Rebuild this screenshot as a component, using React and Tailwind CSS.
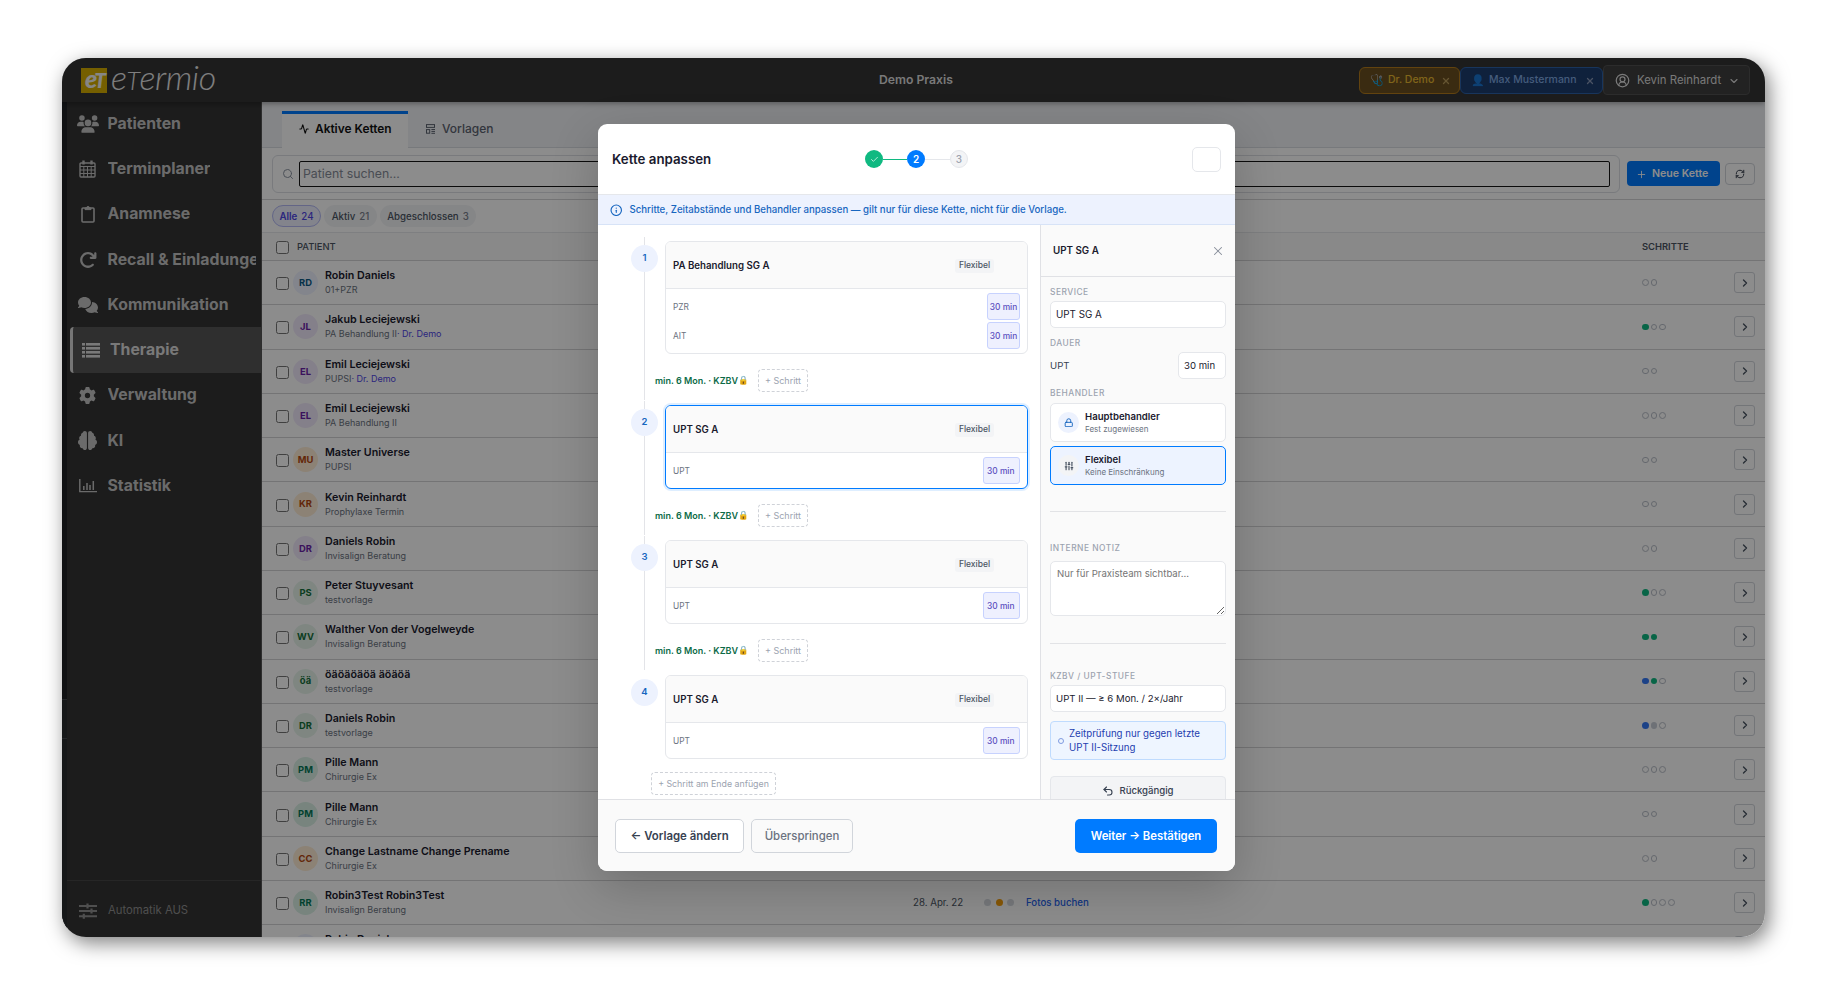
import { FaUsers, FaComments, FaGear, FaBrain, FaArrowRotateRight } from 'react-icons/fa6';
import {
  Activity, Check, ChevronDown, ChevronRight, CircleUserRound, Info,
  Lock, Plus, RefreshCw, Search, SlidersVertical, Undo2, X,
} from 'lucide-react';

const CalendarIcon = () => (
  <svg width="17" height="18" viewBox="0 0 17 18" fill="none" stroke="currentColor">
    <rect x="1" y="3" width="15" height="14" rx="1" strokeWidth="1.4" />
    <path d="M1 6.5h15M1 10h15M1 13.5h15M4.8 6v11M8.5 6v11M12.2 6v11" strokeWidth="1" />
    <path d="M4.5 0.5v4M12.5 0.5v4" strokeWidth="2.4" />
  </svg>
);

const ClipboardIcon = () => (
  <svg width="14" height="18" viewBox="0 0 14 18" fill="none" stroke="currentColor">
    <rect x="1" y="3" width="12" height="14" rx="1" strokeWidth="1.6" />
    <path d="M4 4.6V3h1.5a1.5 1.5 0 0 1 3 0H10v1.6z" fill="currentColor" strokeWidth="1" />
  </svg>
);

const ListIcon = () => (
  <svg width="18" height="15" viewBox="0 0 18 15" fill="currentColor">
    {[0, 4, 8, 12].map((y) => (
      <g key={y}>
        <rect x="0" y={y} width="3" height="2.6" />
        <rect x="4" y={y} width="14" height="2.6" />
      </g>
    ))}
  </svg>
);

const ChartIcon = () => (
  <svg width="18" height="14" viewBox="0 0 18 14" fill="none" stroke="currentColor">
    <path d="M.8 0v12.6H18" strokeWidth="1.4" />
    <path d="M4.8 7v4M8 4v7M11 6v5M14.3 2v9" strokeWidth="1.5" />
  </svg>
);

const SlidersIcon = () => (
  <svg width="18" height="16" viewBox="0 0 18 16" fill="none" stroke="currentColor">
    <path d="M0 3h18M0 8h18M0 13.2h18" strokeWidth="1.9" />
    <path d="M8.5 0.5v5M12.5 5.5v5M4.8 10.7v5" strokeWidth="2.2" />
  </svg>
);

const TemplateIcon = () => (
  <svg width="9" height="10" viewBox="0 0 9 10" fill="none" stroke="currentColor">
    <rect x=".5" y=".6" width="8" height="2.8" />
    <rect x=".5" y="5.6" width="3.2" height="3.6" />
    <path d="M5.4 5.5H9M5.4 7.4H9M5.4 9.3H9" />
  </svg>
);

const nav = [
  { title: 'Patienten', icon: <FaUsers size={22} /> },
  { title: 'Terminplaner', icon: <CalendarIcon /> },
  { title: 'Anamnese', icon: <ClipboardIcon /> },
  { title: 'Recall & Einladungen', icon: <FaArrowRotateRight size={18} /> },
  { title: 'Kommunikation', icon: <FaComments size={20} /> },
  { title: 'Therapie', icon: <ListIcon />, active: true },
  { title: 'Verwaltung', icon: <FaGear size={17} /> },
  { title: 'KI', icon: <FaBrain size={19} /> },
  { title: 'Statistik', icon: <ChartIcon /> },
];

const tones = {
  blue: 'bg-[#eef2ff] text-[#0c5a86]',
  purple: 'bg-[#f1eafb] text-[#6b21a8]',
  orange: 'bg-[#ffedd5] text-[#b4470f]',
  green: 'bg-[#e8f5ec] text-[#15703a]',
  teal: 'bg-[#daf1e6] text-[#047857]',
};

const dots = {
  open: 'border border-[#b9bec8]',
  done: 'bg-[#10b981]',
  next: 'bg-[#3478f6]',
  gray: 'bg-[#c9ced8]',
};

const patients = [
  { name: 'Robin Daniels', sub: '01+PZR', short: 'RD', tone: 'blue', steps: ['open', 'open'] },
  { name: 'Jakub Leciejewski', sub: 'PA Behandlung II', doctor: 'Dr. Demo', short: 'JL', tone: 'purple', steps: ['done', 'open', 'open'] },
  { name: 'Emil Leciejewski', sub: 'PUPSI', doctor: 'Dr. Demo', short: 'EL', tone: 'purple', steps: ['open', 'open'] },
  { name: 'Emil Leciejewski', sub: 'PA Behandlung II', short: 'EL', tone: 'purple', steps: ['open', 'open', 'open'] },
  { name: 'Master Universe', sub: 'PUPSI', short: 'MU', tone: 'orange', steps: ['open', 'open'] },
  { name: 'Kevin Reinhardt', sub: 'Prophylaxe Termin', short: 'KR', tone: 'orange', steps: ['open', 'open'] },
  { name: 'Daniels Robin', sub: 'Invisalign Beratung', short: 'DR', tone: 'purple', steps: ['open', 'open'] },
  { name: 'Peter Stuyvesant', sub: 'testvorlage', short: 'PS', tone: 'green', steps: ['done', 'open', 'open'] },
  { name: 'Walther Von der Vogelweyde', sub: 'Invisalign Beratung', short: 'WV', tone: 'green', steps: ['done', 'done'] },
  { name: 'öäöäöäöä äöäöä', sub: 'testvorlage', short: 'öä', tone: 'green', steps: ['next', 'done', 'open'] },
  { name: 'Daniels Robin', sub: 'testvorlage', short: 'DR', tone: 'green', steps: ['next', 'gray', 'open'] },
  { name: 'Pille Mann', sub: 'Chirurgie Ex', short: 'PM', tone: 'teal', steps: ['open', 'open', 'open'] },
  { name: 'Pille Mann', sub: 'Chirurgie Ex', short: 'PM', tone: 'teal', steps: ['open', 'open'] },
  { name: 'Change Lastname Change Prename', sub: 'Chirurgie Ex', short: 'CC', tone: 'orange', steps: ['open', 'open'] },
  { name: 'Robin3Test Robin3Test', sub: 'Invisalign Beratung', short: 'RR', tone: 'teal', steps: ['done', 'open', 'open', 'open'], date: '28. Apr. 22', action: 'Fotos buchen' },
  { name: 'Robin Daniels', sub: '', short: '', tone: 'blue', steps: [] },
];

const Checkbox = () => <span className="mt-[2px] size-[13px] shrink-0 rounded-[2.5px] border border-[#767676] bg-white" />;

const Header = () => (
  <header className="relative z-10 flex h-[44px] shrink-0 items-center bg-[#343434] shadow-[0_1px_6px_rgba(0,0,0,0.4)]">
    <div className="flex w-[600px] items-center pl-[19px]">
      <div className="flex h-[25px] w-[26px] items-center justify-center bg-[#d6ae00] pb-[3px] font-['Lato'] text-[25px] leading-none font-black tracking-[-3px] text-[#f4f4f4] italic">
        <span>e<span className="text-[21px]">T</span></span>
      </div>
      <div className="-mt-[4px] ml-[4px] font-['Lato'] text-[34px] leading-[34px] font-light tracking-[-0.4px] text-[#e8e8e8] italic">
        e<span className="text-[25px]">T</span>ermio
      </div>
    </div>
    <div className="w-[509px] pl-[217px] text-[12.2px] font-semibold text-[#dddddd]">Demo Praxis</div>
    <div className="ml-[188px] flex items-center text-[10.5px] font-medium">
      <div className="flex h-[27px] w-[101px] items-center rounded-[6px] border border-[#b27b1c] bg-[#6b4f20] pt-px pl-[10px] text-[#e8b931]">
        <span className="w-[18px] text-[11px]">🩺</span>
        <span className="w-[53px] whitespace-nowrap">Dr. Demo</span>
        <X size={10} strokeWidth={3} className="shrink-0 text-[#b99b5a]" />
      </div>
      <div className="flex h-[27px] w-[143px] items-center rounded-[6px] border border-[#2c62a8] bg-[#1c3c6e] pt-px pl-[10px] text-[#7fa8e0]">
        <span className="w-[18px] text-[11px]">👤</span>
        <span className="w-[96px] whitespace-nowrap">Max Mustermann</span>
        <X size={10} strokeWidth={3} className="shrink-0 text-[#8798b5]" />
      </div>
      <div className="flex h-[30px] w-[147px] items-center rounded-[4px] border border-[#505050] bg-[#3f3f3f] pt-px pl-[11px] text-[11.4px] font-normal text-[#dcdcdc]">
        <CircleUserRound size={15} className="mr-[7px] shrink-0" />
        <span className="w-[91px] whitespace-nowrap">Kevin Reinhardt</span>
        <ChevronDown size={12} strokeWidth={2.2} className="shrink-0" />
      </div>
    </div>
  </header>
);

const Sidebar = () => (
  <aside className="flex w-[200px] shrink-0 border-r border-[#555] bg-[#343434]">
    <div className="w-[5px] shrink-0 bg-[#1f2226]">
      <div className="mt-[597px] h-[40px] border-y border-[#45494d] bg-[#292c2f]" />
      <div className="h-[240px] bg-[#292c2f]" />
    </div>
    <div className="-mt-px flex min-w-0 flex-1 flex-col overflow-hidden">
      {nav.map((el) => (
        <div key={el.title} className={el.active
          ? 'ml-[3px] flex h-[45.3px] shrink-0 items-center rounded-l-[4px] border-l-[3px] border-[#d8d8d8] bg-[#575757] text-[#dcdcdc]'
          : 'flex h-[45.3px] shrink-0 items-center text-[#c4c4c4]'}>
          <div className={el.active ? 'ml-[3px] flex w-[34px] shrink-0 justify-center pr-[4px]' : 'ml-[9px] flex w-[31.5px] shrink-0 justify-center pr-[8px]'}>{el.icon}</div>
          <div className="mr-[5px] overflow-hidden text-[15.8px] leading-[22px] font-bold whitespace-nowrap">{el.title}</div>
        </div>
      ))}
      <div className="mt-auto flex h-[57px] items-center border-t border-[#454545] pt-[3px] pl-[12px] text-[#909090]">
        <SlidersIcon />
        <span className="ml-[11px] text-[11.3px]">Automatik AUS</span>
      </div>
    </div>
  </aside>
);

const Row = ({ name, sub, doctor, short, tone, steps, date, action }) => (
  <div className="flex h-[44.29px] shrink-0 items-center border-b border-[#d3d3d6] pl-[14px]">
    <Checkbox />
    <div className={'ml-[4px] flex size-[25px] shrink-0 items-center justify-center rounded-full text-[9.4px] font-bold ' + tones[tone]}>{short}</div>
    <div className="ml-[7px] w-[588px] whitespace-nowrap">
      <div className="text-[10.7px] leading-[15px] font-semibold text-[#1a1a2e]">{name}</div>
      <div className="text-[9px] leading-[14px] text-[#6b7280]">
        {sub}{doctor && <span className="text-[#4f46e5]">· {doctor}</span>}&nbsp;
      </div>
    </div>
    <div className="flex w-[729px] items-center text-[9.7px] text-[#4b5563]">
      {date && <>
        <span className="w-[71px]">{date}</span>
        <span className="mr-[12px] flex gap-[4.5px]">
          <i className="size-[7px] rounded-full bg-[#d5d9df]" />
          <i className="size-[7px] rounded-full bg-[#f59e0b]" />
          <i className="size-[7px] rounded-full bg-[#d5d9df]" />
        </span>
        <span className="font-medium text-[#2563eb]">{action}</span>
      </>}
    </div>
    <div className="flex w-[92px] gap-[2.2px]">
      {steps.map((el, i) => <i key={i} className={'size-[6.5px] rounded-full ' + dots[el]} />)}
    </div>
    <div className="flex h-[21px] w-[21px] items-center justify-center rounded-[3px] border border-[#d1d5db] text-[#4b5563]">
      <ChevronRight size={12} strokeWidth={2.8} />
    </div>
  </div>
);

const Main = () => (
  <main className="flex min-w-0 flex-1 flex-col overflow-hidden bg-white">
    <div className="flex h-[46px] shrink-0 items-end border-b border-[#d9dce2] bg-[#f0f2f6] pl-[20px]">
      <div className="-mb-px flex h-[37px] w-[126px] items-center border-t-[3px] border-[#007bff] bg-white pb-[4px] pl-[17px] text-[11.9px] font-semibold text-[#111]">
        <Activity size={10} strokeWidth={2.6} className="mr-[6px]" />
        Aktive Ketten
      </div>
      <div className="flex h-[37px] items-center pl-[18px] text-[12px] font-medium text-[#5c6370]">
        <span className="mr-[7px]"><TemplateIcon /></span>
        Vorlagen
      </div>
    </div>
    <div className="flex h-[52px] shrink-0 items-center border-b border-[#d3d3d6] pl-[10px]">
      <div className="flex h-[38px] w-[1348px] items-center rounded-[6px] border border-[#dcdfe4] pl-[9px]">
        <Search size={12} strokeWidth={2} className="mr-[5px] text-[#8b93a0]" />
        <div className="flex h-[26px] w-[1311px] items-center rounded-[2px] border border-[#151515] pt-px pl-[3px] text-[12.3px] text-[#858b97]">
          Patient suchen...
        </div>
      </div>
      <div className="ml-[7px] flex h-[25px] w-[93px] items-center rounded-[4px] bg-[#007bff] pt-px pl-[9px] text-[10.6px] font-semibold text-white">
        <Plus size={11} strokeWidth={1.9} className="mr-[5px]" />
        Neue Kette
      </div>
      <div className="ml-[5px] flex h-[22px] w-[30px] items-center justify-center rounded-[4px] border border-[#d1d5db] text-[#3b4250]">
        <RefreshCw size={10} strokeWidth={2.4} />
      </div>
    </div>
    <div className="flex h-[33px] shrink-0 items-center gap-[3px] border-b border-[#e5e7eb] pl-[10px] text-[9.7px] font-medium text-[#4b5563]">
      <div className="flex h-[22px] w-[49px] items-center justify-center gap-[4px] rounded-full border border-[#b4b9f5] bg-[#eef0ff] pt-px font-semibold text-[#4f46e5]">Alle <span className="font-medium">24</span></div>
      <div className="flex h-[22px] w-[53px] items-center justify-center gap-[4px] rounded-full bg-[#f3f4f6] pt-px">Aktiv <span className="text-[#7b818d]">21</span></div>
      <div className="flex h-[22px] w-[96px] items-center justify-center gap-[4px] rounded-full bg-[#f3f4f6] pt-px">Abgeschlossen <span className="text-[#7b818d]">3</span></div>
    </div>
    <div className="flex h-[28px] shrink-0 items-center border-b border-[#d3d3d6] bg-[#fafafa] pl-[14px] text-[9.4px] font-medium text-[#4b5563]">
      <Checkbox />
      <span className="ml-[8px] w-[1345px]">PATIENT</span>
      <span className="font-semibold">SCHRITTE</span>
    </div>
    {patients.map((el, i) => <Row key={i} {...el} />)}
  </main>
);

const Step = ({ number, title, services, selected, last }) => (
  <div className="flex">
    <div className="relative flex w-[27px] flex-col items-center">
      {!last && <div className="absolute -top-1 bottom-[5px] w-px bg-[#e3e4e8]" />}
      <div className="relative mt-[3.5px] flex size-[27px] items-center justify-center rounded-full bg-[#edf2fe] text-[9.5px] font-semibold text-[#1766c0]">{number}</div>
    </div>
    <div className="ml-[7px]">
      <div className={selected
        ? 'w-[363px] overflow-hidden rounded-[6px] border border-[#007bff] bg-white shadow-[0_0_0_2px_rgba(0,123,255,0.13)]'
        : 'w-[363px] overflow-hidden rounded-[6px] border border-[#e5e7eb] bg-white'}>
        <div className="flex h-[47px] items-center border-b border-[#e5e7eb] bg-[#fafafa] pt-px pl-[7px] text-[9.7px] font-semibold text-[#1a1a2e]">
          <span className="w-[282px]">{title}</span>
          <span className="flex h-[14px] w-[39px] items-center justify-center rounded-[3px] bg-[#f3f4f6] text-[8.5px] font-medium text-[#4b5563]">Flexibel</span>
        </div>
        <div className={services.length > 1 ? 'flex flex-col gap-[2px] py-[4px]' : 'py-[4px]'}>
          {services.map((el) => (
            <div key={el} className="flex h-[27px] items-center justify-between pr-[7px] pl-[7px]">
              <span className="pt-[2px] text-[8.3px] text-[#6b7280]">{el}</span>
              <span className={services.length > 1
                ? 'flex h-full w-[33px] items-center justify-center rounded-[3px] border border-[#c7d2fe] bg-[#eef0fe] pt-[2px] text-[8.4px] font-medium text-[#5b4fc0]'
                : 'flex h-full w-[37px] items-center rounded-[3px] border border-[#c7d2fe] bg-[#eef0fe] pt-px pl-[3px] text-[8.4px] font-medium text-[#5b4fc0]'}>30 min</span>
            </div>
          ))}
        </div>
      </div>
      {!last && (
        <div className="-ml-[10px] flex h-[51px] items-center pt-px text-[9px] font-semibold text-[#0c6b47]">
          <span className="w-[83px] whitespace-nowrap">min. 6 Mon. · KZBV</span>
          <span className="w-[20px] text-[8.6px]">🔒</span>
          <span className="flex h-[23px] w-[50px] items-center justify-center rounded-[4px] border border-dashed border-[#cfd2d8] text-[9px] font-normal text-[#9ca3af]">+ Schritt</span>
        </div>
      )}
    </div>
  </div>
);

const Label = ({ children }) => <div className="text-[8.4px] leading-[12px] font-medium tracking-[0.5px] text-[#9ca3af]">{children}</div>;

const Option = ({ icon, title, text, active }) => (
  <div className={active
    ? 'flex h-[39px] items-center rounded-[5px] border border-[#007bff] bg-[#edf3ff] pl-[7px]'
    : 'flex h-[39px] items-center rounded-[5px] border border-[#e5e7eb] bg-white pl-[7px]'}>
    <div className={active
      ? 'flex size-[21px] items-center justify-center rounded-full bg-[#f3f4f6] text-[#4b5563]'
      : 'flex size-[21px] items-center justify-center rounded-full bg-[#edf2fe] text-[#1766c0]'}>{icon}</div>
    <div className="ml-[6px] pt-px">
      <div className="text-[9.6px] leading-[13px] font-semibold text-[#1a1a2e]">{title}</div>
      <div className="text-[8px] leading-[13px] text-[#6b7280]">{text}</div>
    </div>
  </div>
);

const Details = () => (
  <div className="flex w-[195px] shrink-0 flex-col overflow-hidden border-l border-[#e0e1e5] bg-[#fafafa]">
    <div className="flex h-[52px] shrink-0 items-center justify-between border-b border-[#e0e1e5] pr-[10px] pl-[12px]">
      <span className="text-[9.8px] font-semibold text-[#1a1a2e]">UPT SG A</span>
      <X size={14} strokeWidth={1.8} className="text-[#868d99]" />
    </div>
    <div className="flex flex-col px-[9px] pt-[9px]">
      <Label>SERVICE</Label>
      <div className="mt-[3px] flex h-[27px] shrink-0 items-center rounded-[5px] border border-[#e5e7eb] bg-white pt-px pl-[5px] text-[9.8px] text-[#1a1a2e]">UPT SG A</div>
      <div className="mt-[9px]"><Label>DAUER</Label></div>
      <div className="mt-[3px] flex h-[27px] items-center justify-between text-[9.6px] text-[#374151]">
        UPT
        <span className="flex h-full w-[48px] items-center rounded-[5px] border border-[#e5e7eb] bg-white pl-[5px] text-[#1a1a2e]">30 min</span>
      </div>
      <div className="mt-[8px]"><Label>BEHANDLER</Label></div>
      <div className="mt-[4px] flex flex-col gap-[4px]">
        <Option icon={<Lock size={9.5} strokeWidth={2.4} />} title="Hauptbehandler" text="Fest zugewiesen" />
        <Option icon={<SlidersVertical size={10} strokeWidth={2.8} />} title="Flexibel" text="Keine Einschränkung" active />
      </div>
      <div className="mt-[26px] h-px bg-[#e2e3e6]" />
      <div className="mt-[30px]"><Label>INTERNE NOTIZ</Label></div>
      <textarea
        className="mt-[7px] block h-[55px] w-full rounded-[5px] border border-[#e5e7eb] bg-white px-[6px] py-[4px] text-[9.6px] leading-[15px] placeholder:text-[#757575]"
        placeholder="Nur für Praxisteam sichtbar..."
      />
      <div className="mt-[27px] h-px bg-[#e2e3e6]" />
      <div className="mt-[26px]"><Label>KZBV / UPT-STUFE</Label></div>
      <div className="mt-[3px] flex h-[27px] shrink-0 items-center rounded-[5px] border border-[#e5e7eb] bg-white pt-px pl-[5px] text-[9.6px] text-[#1a1a2e]">UPT II — ≥ 6 Mon. / 2×/Jahr</div>
      <div className="mt-[9px] flex h-[39px] items-center rounded-[4px] border border-[#bfdbfe] bg-[#eef5ff] pt-px pl-[7px] text-[9.7px] leading-[14.5px] text-[#1e40af]">
        <span className="mr-[5px] size-[6px] shrink-0 rounded-full border border-[#7f9be0]" />
        <span className="whitespace-nowrap">Zeitprüfung nur gegen letzte<br />UPT II-Sitzung</span>
      </div>
      <div className="mt-[16px] flex h-[30px] shrink-0 items-center justify-center rounded-[4px] border border-[#e5e7eb] bg-[#f3f4f6] text-[9.6px] font-medium text-[#374151]">
        <Undo2 size={12} strokeWidth={2.2} className="mr-[5px]" />
        Rückgängig
      </div>
    </div>
  </div>
);

const ChainModal = () => (
  <div className="absolute top-[66px] left-[536px] flex h-[747px] w-[637px] flex-col overflow-hidden rounded-[9px] bg-white shadow-[0_16px_48px_rgba(0,0,0,0.2)]">
    <div className="flex h-[71px] shrink-0 items-center border-b border-[#e5e7eb] pl-[14px]">
      <span className="w-[253px] pt-px text-[13.3px] font-semibold text-[#1a1a2e]">Kette anpassen</span>
      <span className="flex size-[18px] items-center justify-center rounded-full bg-[#10b981] text-white"><Check size={9} strokeWidth={1.8} /></span>
      <span className="h-px w-[24px] bg-[#10b981]" />
      <span className="flex size-[18px] items-center justify-center rounded-full bg-[#007bff] text-[10px] font-semibold text-white">2</span>
      <span className="h-px w-[25px] bg-[#e5e7eb]" />
      <span className="flex size-[18px] items-center justify-center rounded-full border border-[#e5e7eb] bg-[#f3f4f6] text-[10px] font-medium text-[#9ca3af]">3</span>
      <span className="ml-[224px] h-[25px] w-[29px] rounded-[5px] border border-[#e5e7eb]" />
    </div>
    <div className="flex h-[30px] shrink-0 items-center border-b border-[#d7e3f7] bg-[#edf2fe] pt-px pl-[12px] text-[9.67px] font-medium text-[#1766c0]">
      <Info size={12.5} strokeWidth={2.2} className="mr-[7px]" />
      Schritte, Zeitabstände und Behandler anpassen — gilt nur für diese Kette, nicht für die Vorlage.
    </div>
    <div className="flex h-[574px] shrink-0">
      <div className="flex flex-1 flex-col pt-[16px] pl-[33px]">
        <Step number={1} title="PA Behandlung SG A" services={['PZR', 'AIT']} />
        <Step number={2} title="UPT SG A" services={['UPT']} selected />
        <Step number={3} title="UPT SG A" services={['UPT']} />
        <Step number={4} title="UPT SG A" services={['UPT']} last />
        <div className="mt-[13px] ml-[20px] flex h-[23px] w-[125px] shrink-0 items-center justify-center rounded-[4px] border border-dashed border-[#cfd2d8] pt-px text-[8.8px] text-[#9ca3af]">+ Schritt am Ende anfügen</div>
      </div>
      <Details />
    </div>
    <div className="flex flex-1 items-center border-t border-[#e0e1e5] bg-[#fafafa] pl-[17px] text-[11.4px]">
      <div className="flex h-[34px] w-[129px] items-center justify-center rounded-[5px] border border-[#d1d5db] bg-white pt-[2px] font-semibold text-[#374151]">← Vorlage ändern</div>
      <div className="ml-[7px] flex h-[34px] w-[102px] items-center justify-center rounded-[5px] border border-[#d1d5db] pt-[2px] font-medium text-[#6b7280]">Überspringen</div>
      <div className="mr-[18px] ml-auto flex h-[34px] w-[142px] items-center justify-center rounded-[5px] bg-[#007bff] pt-[2px] text-[11.3px] font-semibold text-white">Weiter → Bestätigen</div>
    </div>
  </div>
);

const App = () => (
  <div className="h-[995px] w-[1827px] overflow-hidden bg-white pt-[58px] pl-[62px] font-['Inter',sans-serif] leading-none">
    <div className="relative flex h-[879px] w-[1703px] flex-col overflow-hidden rounded-[24px] shadow-[4px_6px_20px_rgba(0,0,0,0.5)]">
      <Header />
      <div className="flex min-h-0 flex-1">
        <Sidebar />
        <Main />
      </div>
      <div className="absolute inset-0 z-20 bg-black/45">
        <ChainModal />
      </div>
    </div>
  </div>
);

export default App;
